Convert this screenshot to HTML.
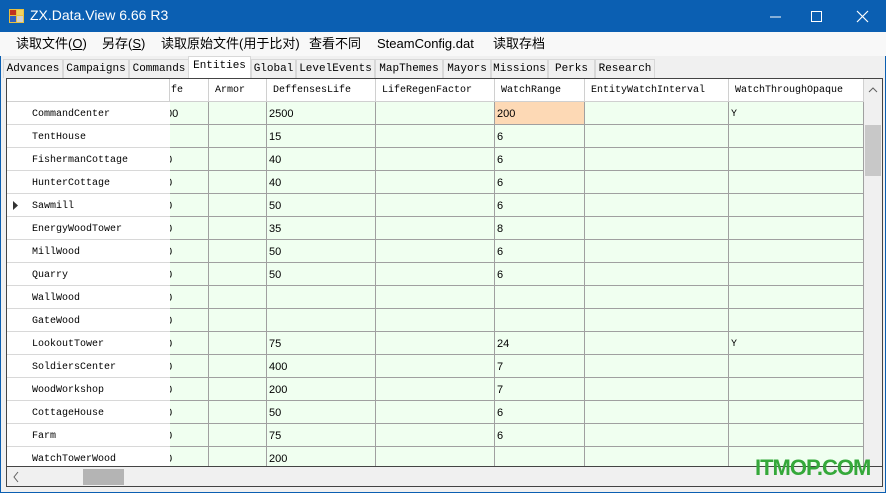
<!DOCTYPE html>
<html><head><meta charset="utf-8"><style>
*{margin:0;padding:0;box-sizing:border-box}
body{width:886px;height:493px;overflow:hidden;background:#f0f0f0;font-family:"Liberation Sans","Noto Sans CJK SC",sans-serif;position:relative}
#title{position:absolute;left:0;top:0;width:886px;height:32px;background:#0b5fb2;color:#fff;font-size:14px}
#title .t{position:absolute;left:30px;top:7px}
#win{position:absolute;left:0;top:32px;width:886px;height:461px;border:1px solid #0b5fb2;border-top:none;background:#f0f0f0}
#menu{position:absolute;left:0;top:32px;width:886px;height:24px;background:#f8f8f8;font-size:13px}
#menu span{position:absolute;top:0;height:24px;line-height:24px}
#tabs{position:absolute;left:3px;top:58px;height:20px;font-family:"Liberation Mono",monospace;font-size:11px}
#tabs div{position:absolute;top:1px;height:19px;border:1px solid #d8d8d8;border-bottom:none;background:#f0f0f0;padding-top:3px;text-align:center}
#tabs div.a{top:-2px;height:22px;background:#fff;z-index:2}
#grid{position:absolute;left:6px;top:78px;width:877px;height:389px;border:1px solid #444;background:#fff;overflow:hidden}
.c{position:absolute;height:23px;border-right:1px solid #a0a0a0;border-bottom:1px solid #a0a0a0;background:#f0fff0;font-size:11px;padding:6px 0 0 2px;overflow:hidden;white-space:nowrap}
.h{position:absolute;height:23px;border-right:1px solid #d0d0d0;border-bottom:1px solid #d0d0d0;background:#fff;font-family:"Liberation Mono",monospace;font-size:10px;padding:6px 0 0 6px;overflow:hidden;white-space:nowrap}
.rh{position:absolute;left:0;width:163px;height:23px;border-bottom:1px solid #d8d8d8;font-family:"Liberation Mono",monospace;font-size:10px;padding:7px 0 0 25px;background:#fff}
#vs{position:absolute;left:857px;top:0;width:18px;height:389px;background:#f0f0f0}
#hs{position:absolute;left:6px;top:467px;width:877px;height:20px;background:#f0f0f0;border:1px solid #444;border-top:none}
</style></head><body>
<div id="win"></div>
<div id="title">
<svg style="position:absolute;left:9px;top:9px" width="15" height="14"><rect x="0" y="0" width="15" height="14" fill="#e8c040"/><rect x="1" y="1" width="6" height="5" fill="#c03020"/><rect x="8" y="1" width="6" height="5" fill="#f0d060"/><rect x="1" y="7" width="6" height="6" fill="#3060c0"/><rect x="8" y="7" width="6" height="6" fill="#d0d0d0"/></svg>
<span class="t">ZX.Data.View 6.66 R3</span>
<svg style="position:absolute;left:770px;top:10px" width="110" height="14"><line x1="0" y1="7" x2="11" y2="7" stroke="#fff"/><rect x="41.5" y="1.5" width="10" height="10" fill="none" stroke="#fff"/><path d="M87 1L98 12M98 1L87 12" stroke="#fff" stroke-width="1.2"/></svg>
</div>
<div id="menu">
<span style="left:16px">读取文件(<u>O</u>)</span>
<span style="left:102px">另存(<u>S</u>)</span>
<span style="left:161px">读取原始文件(用于比对)</span>
<span style="left:309px">查看不同</span>
<span style="left:377px">SteamConfig.dat</span>
<span style="left:493px">读取存档</span>
</div>
<div id="tabs">
<div style="left:0;width:60px">Advances</div>
<div style="left:60px;width:66px">Campaigns</div>
<div style="left:126px;width:60px">Commands</div>
<div class="a" style="left:185px;width:63px">Entities</div>
<div style="left:248px;width:45px">Global</div>
<div style="left:293px;width:79px">LevelEvents</div>
<div style="left:372px;width:68px">MapThemes</div>
<div style="left:440px;width:48px">Mayors</div>
<div style="left:488px;width:57px">Missions</div>
<div style="left:545px;width:47px">Perks</div>
<div style="left:592px;width:60px">Research</div>
</div>
<div id="grid">
<div class="h" style="left:0;top:0;width:163px"></div>
<div class="h" style="left:163px;top:0;width:39px;padding-left:1px">fe</div>
<div class="h" style="left:202px;top:0;width:58px">Armor</div>
<div class="h" style="left:260px;top:0;width:109px">DeffensesLife</div>
<div class="h" style="left:369px;top:0;width:119px">LifeRegenFactor</div>
<div class="h" style="left:488px;top:0;width:90px">WatchRange</div>
<div class="h" style="left:578px;top:0;width:144px">EntityWatchInterval</div>
<div class="h" style="left:722px;top:0;width:135px">WatchThroughOpaque</div>
<div id="rows"></div>
<div id="vs"><svg width="18" height="20"><path d="M5 13L9 9L13 13" fill="none" stroke="#606060"/></svg><div style="position:absolute;left:1px;top:46px;width:16px;height:51px;background:#c8c8c8"></div></div>
</div>
<div id="hs"><svg width="877" height="20"><path d="M11 5L7 10L11 15" fill="none" stroke="#606060"/><rect x="76" y="2" width="41" height="16" fill="#b4b4b4"/></svg></div>
<div style="position:absolute;left:755px;top:455px;color:#35a83a;font-size:22px;font-weight:bold;letter-spacing:-1px">ITMOP.COM</div>
<script>
var d=[["CommandCenter","00","2500","200","Y"],["TentHouse","","15","6",""],["FishermanCottage","0","40","6",""],["HunterCottage","0","40","6",""],["Sawmill","0","50","6",""],["EnergyWoodTower","0","35","8",""],["MillWood","0","50","6",""],["Quarry","0","50","6",""],["WallWood","0","","",""],["GateWood","0","","",""],["LookoutTower","0","75","24","Y"],["SoldiersCenter","0","400","7",""],["WoodWorkshop","0","200","7",""],["CottageHouse","0","50","6",""],["Farm","0","75","6",""],["WatchTowerWood","0","200","",""]];
var cols=[[163,39],[202,58],[260,109],[369,119],[488,90],[578,144],[722,135]];
var h="";
d.forEach(function(r,i){var y=23+i*23;
h+='<div class="rh" style="top:'+y+'px">'+r[0]+'</div>';
if(i==4)h+='<svg style="position:absolute;left:6px;top:'+(y+7)+'px" width="6" height="9"><path d="M0 0L5 4.5L0 9Z" fill="#333"/></svg>';
var v=[r[1]?'<span style="margin-left:-6px">'+r[1]+'</span>':'', '',r[2],'',r[3],'',r[4]];
cols.forEach(function(c,j){var bg=(i==0&&j==4)?'background:#fdd9b5;':'';var f=(j==6)?'font-family:Liberation Mono,monospace;font-size:10px;padding-top:7px;':'';
h+='<div class="c" style="'+bg+f+'left:'+c[0]+'px;top:'+y+'px;width:'+c[1]+'px">'+v[j]+'</div>';});
});
document.getElementById('rows').innerHTML=h;
</script>
</body></html>
